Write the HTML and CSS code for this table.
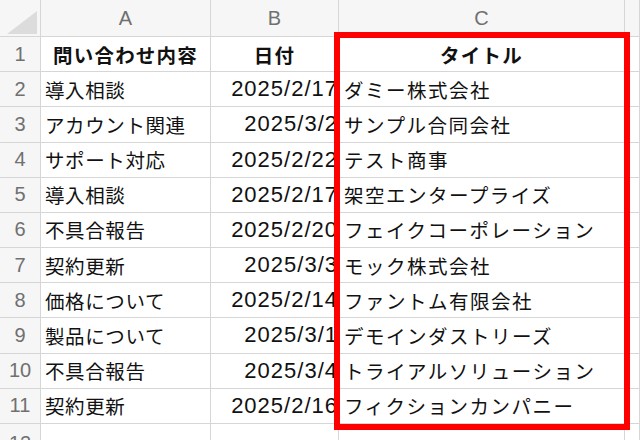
FILE: index.html
```html
<!DOCTYPE html>
<html lang="ja">
<head>
<meta charset="utf-8">
<link rel="stylesheet" href="styles.css">
</head>
<body>
<div class="sheet">
  <div class="grid">
    <div class="hd corner"><span class="tri"></span></div>
    <div class="hd col">A</div>
    <div class="hd col">B</div>
    <div class="hd col">C</div>
    <div class="hd col"></div>

    <div class="hd rn">1</div>
    <div class="c b ctr">問い合わせ内容</div>
    <div class="c b ctr">日付</div>
    <div class="c b ctr">タイトル</div>
    <div class="c"></div>

    <div class="hd rn">2</div>
    <div class="c">導入相談</div>
    <div class="c num">2025/2/17</div>
    <div class="c t">ダミー株式会社</div>
    <div class="c"></div>

    <div class="hd rn">3</div>
    <div class="c">アカウント関連</div>
    <div class="c num">2025/3/2</div>
    <div class="c t">サンプル合同会社</div>
    <div class="c"></div>

    <div class="hd rn">4</div>
    <div class="c">サポート対応</div>
    <div class="c num">2025/2/22</div>
    <div class="c t">テスト商事</div>
    <div class="c"></div>

    <div class="hd rn">5</div>
    <div class="c">導入相談</div>
    <div class="c num">2025/2/17</div>
    <div class="c t">架空エンタープライズ</div>
    <div class="c"></div>

    <div class="hd rn">6</div>
    <div class="c">不具合報告</div>
    <div class="c num">2025/2/20</div>
    <div class="c t">フェイクコーポレーション</div>
    <div class="c"></div>

    <div class="hd rn">7</div>
    <div class="c">契約更新</div>
    <div class="c num">2025/3/3</div>
    <div class="c t">モック株式会社</div>
    <div class="c"></div>

    <div class="hd rn">8</div>
    <div class="c">価格について</div>
    <div class="c num">2025/2/14</div>
    <div class="c t">ファントム有限会社</div>
    <div class="c"></div>

    <div class="hd rn">9</div>
    <div class="c">製品について</div>
    <div class="c num">2025/3/1</div>
    <div class="c t">デモインダストリーズ</div>
    <div class="c"></div>

    <div class="hd rn">10</div>
    <div class="c">不具合報告</div>
    <div class="c num">2025/3/4</div>
    <div class="c t">トライアルソリューション</div>
    <div class="c"></div>

    <div class="hd rn">11</div>
    <div class="c">契約更新</div>
    <div class="c num">2025/2/16</div>
    <div class="c t">フィクションカンパニー</div>
    <div class="c"></div>

    <div class="hd rn">12</div>
    <div class="c"></div>
    <div class="c"></div>
    <div class="c"></div>
    <div class="c"></div>
  </div>
  <div class="sel"></div>
</div>
</body>
</html>
```
FILE: styles.css
```css
html, body {
  margin: 0;
  padding: 0;
  background: #ffffff;
  overflow: hidden;
}
.sheet {
  position: relative;
  width: 640px;
  height: 440px;
  overflow: hidden;
  font-family: "Noto Sans CJK JP", "Liberation Sans", sans-serif;
  color: #111111;
}
.grid {
  display: grid;
  grid-template-columns: 41px 170px 128px 286px 1fr;
  grid-template-rows: 37px repeat(11, 35.18px) 40px;
}
.grid > div {
  box-sizing: border-box;
  border-right: 1px solid #d6d6d6;
  border-bottom: 1px solid #d6d6d6;
  display: flex;
  align-items: center;
  white-space: nowrap;
  overflow: visible;
  min-width: 0;
}
.hd {
  background: #f6f6f6;
  color: #707070;
  font-family: "Liberation Sans", "Noto Sans CJK JP", sans-serif;
}
.col {
  justify-content: center;
  font-size: 20px;
  font-weight: 300;
  padding-top: 1px;
}
.rn {
  justify-content: center;
  font-size: 20px;
  background: #f6f6f6;
}
.corner {
  position: relative;
}
.tri {
  position: absolute;
  right: 3px;
  bottom: 2px;
  width: 0;
  height: 0;
  border-left: 30px solid transparent;
  border-bottom: 23px solid #dcdcdc;
}
.c {
  font-size: 19.5px;
  padding-left: 4px;
  letter-spacing: 0.6px;
}
.b {
  font-weight: 700;
  letter-spacing: 1.2px;
}
.ctr {
  justify-content: center;
  padding-left: 0;
}
.num {
  justify-content: flex-end;
  padding-left: 0;
  padding-right: 0;
  font-family: "Liberation Sans", sans-serif;
  font-size: 22px;
  letter-spacing: 1px;
}
.t {
  padding-left: 5px;
  letter-spacing: 1.5px;
}
.sel {
  position: absolute;
  left: 334px;
  top: 32px;
  width: 296px;
  height: 398px;
  box-sizing: border-box;
  border: 6px solid #ff0000;
}
```
